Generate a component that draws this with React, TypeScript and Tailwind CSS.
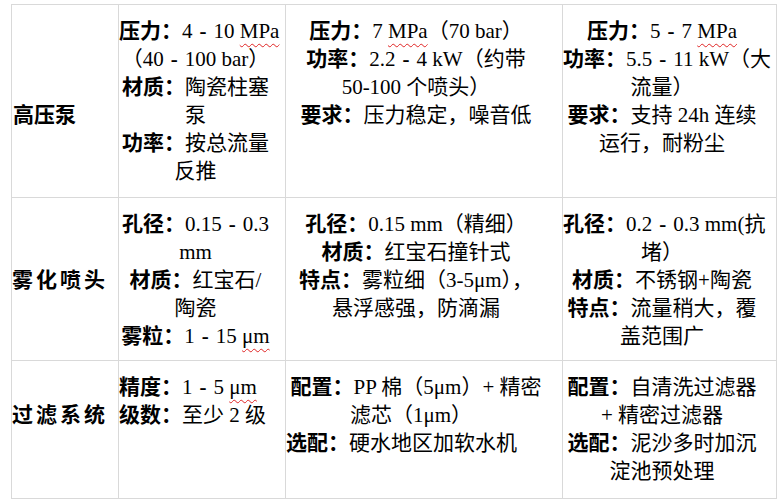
import React from "react";

const B = ({ children }: { children: React.ReactNode }) => (
  <span className="font-bold">{children}</span>
);

const W = ({ children }: { children: React.ReactNode }) => (
  <span className="underline decoration-wavy decoration-[#e02424] decoration-1 underline-offset-[5px]">
    {children}
  </span>
);

const D = () => <span className="inline-block w-[21px] text-center font-bold">-</span>;

const L = ({ children, className = "" }: { children: React.ReactNode; className?: string }) => (
  <div className={"whitespace-nowrap " + className}>{children}</div>
);

const cell = "border-r border-b border-[#d9d9d9]";

export default function App() {
  return (
    <div className="w-[780px] h-[501px] bg-white overflow-hidden pl-[11px] pt-[4px] font-['Liberation_Serif','Noto_Sans_CJK_SC',serif] text-[21px] leading-[28px] text-black">
      <div className="grid w-[766px] grid-cols-[107px_167px_277px_214px] grid-rows-[193px_163px_138px] border-l border-t border-[#d9d9d9]">
        {/* Row 1 */}
        <div className={cell + " pt-[96px] pl-[1px] font-bold whitespace-nowrap"}>高压泵</div>
        <div className={cell + " pt-[12px] pr-[13px] text-center"}>
          <L><B>压力：</B>4<D />10 <W>MPa</W></L>
          <L>（40<D />100 bar）</L>
          <L><B>材质：</B>陶瓷柱塞</L>
          <L>泵</L>
          <L><B>功率：</B>按总流量</L>
          <L>反推</L>
        </div>
        <div className={cell + " pt-[12px] pr-[16px] text-center"}>
          <L><B>压力：</B>7 <W>MPa</W>（70 bar）</L>
          <L><B>功率：</B>2.2<D />4 kW（约带</L>
          <L>50-100 个喷头）</L>
          <L><B>要求：</B>压力稳定，噪音低</L>
        </div>
        <div className={cell + " pt-[12px] pr-[15px] text-center"}>
          <L><B>压力：</B>5<D />7 <W>MPa</W></L>
          <L><B>功率：</B>5.5<D />11 kW（大</L>
          <L>流量）</L>
          <L><B>要求：</B>支持 24h 连续</L>
          <L>运行，耐粉尘</L>
        </div>

        {/* Row 2 */}
        <div className={cell + " pt-[68px] font-bold whitespace-nowrap tracking-[3px]"}>雾化喷头</div>
        <div className={cell + " pt-[12px] pr-[13px] text-center"}>
          <L><B>孔径：</B>0.15<D />0.3</L>
          <L>mm</L>
          <L><B>材质：</B>红宝石/</L>
          <L>陶瓷</L>
          <L><B>雾粒：</B>1<D />15 <W>μm</W></L>
        </div>
        <div className={cell + " pt-[12px] pr-[16px] text-center"}>
          <L><B>孔径：</B>0.15 mm（精细）</L>
          <L><B>材质：</B>红宝石撞针式</L>
          <L><B>特点：</B>雾粒细（3-5μm），</L>
          <L>悬浮感强，防滴漏</L>
        </div>
        <div className={cell + " pt-[12px] pr-[15px] text-center"}>
          <L><B>孔径：</B>0.2<D />0.3 mm(抗</L>
          <L>堵）</L>
          <L><B>材质：</B>不锈钢+陶瓷</L>
          <L><B>特点：</B>流量稍大，覆</L>
          <L>盖范围广</L>
        </div>

        {/* Row 3 */}
        <div className={cell + " pt-[40px] font-bold whitespace-nowrap tracking-[3px]"}>过滤系统</div>
        <div className={cell + " pt-[12px] pr-[13px] text-left"}>
          <L><B>精度：</B>1<D />5 <W>μm</W></L>
          <L><B>级数：</B>至少 2 级</L>
        </div>
        <div className={cell + " pt-[12px] pr-[16px] text-center"}>
          <L><B>配置：</B>PP 棉（5μm）+ 精密</L>
          <L className="pr-[10px]">滤芯（1μm）</L>
          <L className="text-left">
            <B>选配：</B>硬水地区加软水机
          </L>
        </div>
        <div className={cell + " pt-[12px] pr-[15px] text-center"}>
          <L><B>配置：</B>自清洗过滤器</L>
          <L>+ 精密过滤器</L>
          <L><B>选配：</B>泥沙多时加沉</L>
          <L>淀池预处理</L>
        </div>
      </div>
    </div>
  );
}
